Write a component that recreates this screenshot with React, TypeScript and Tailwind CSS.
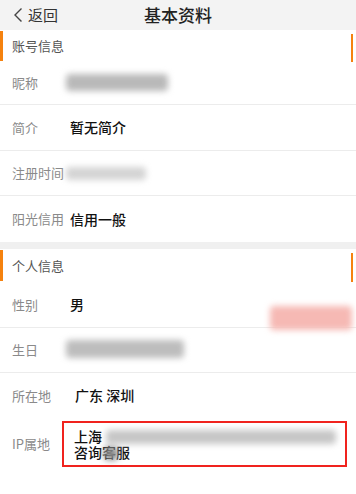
import React from "react";

const Blur = ({ className }: { className: string }) => (
  <div className={`absolute rounded-sm blur-[3px] ${className}`} />
);

const Row = ({
  label,
  h,
  children,
  divider = true,
}: {
  label: string;
  h: string;
  children?: React.ReactNode;
  divider?: boolean;
}) => (
  <div className={`relative flex items-center pl-3 ${h} ${divider ? "border-b border-[#ececec]" : ""}`}>
    <span className="w-[58px] shrink-0 text-[13px] text-[#8a8a8a]">{label}</span>
    <div className="text-[14px] text-[#111]">{children}</div>
  </div>
);

const Section = ({ title, h }: { title: string; h: string }) => (
  <div className={`relative flex items-center bg-white pl-3 ${h}`}>
    <div className="absolute left-0 top-[1px] bottom-[1px] w-[3px] bg-[#f5820f]" />
    <div className="absolute right-[3px] top-[4px] bottom-0 w-[2px] bg-[#f5820f]" />
    <span className="text-[13px] text-[#555]">{title}</span>
  </div>
);

export default function App() {
  return (
    <div
      className="relative h-[494px] w-[356px] overflow-hidden bg-white"
      style={{ fontFamily: '"Noto Sans CJK SC", "Noto Sans", sans-serif' }}
    >
      {/* Header */}
      <div className="relative flex h-[30px] items-center bg-[#f3f3f3]">
        <div className="flex items-center pl-[13px] text-[15px] text-[#333]">
          <svg width="10" height="16" viewBox="0 0 10 16" className="mr-[5px]">
            <path d="M8.5 1.5 L2 8 L8.5 14.5" fill="none" stroke="#444" strokeWidth="1.4" />
          </svg>
          返回
        </div>
        <div className="absolute left-0 right-0 text-center text-[17px] font-medium text-[#222]">基本资料</div>
      </div>

      <Section title="账号信息" h="h-[32px]" />
      <Row label="昵称" h="h-[43px]">
        <Blur className="left-[66px] top-[12px] h-[17px] w-[102px] bg-[#b9b9b9]" />
      </Row>
      <Row label="简介" h="h-[46px]">
        <span className="font-medium">暂无简介</span>
      </Row>
      <Row label="注册时间" h="h-[45px]">
        <Blur className="left-[66px] top-[16px] h-[13px] w-[80px] bg-[#d4d4d4]" />
      </Row>
      <Row label="阳光信用" h="h-[46px]" divider={false}>
        <span className="font-medium">信用一般</span>
      </Row>
      <div className="h-[7px] bg-[#f0f0f0]" />

      <Section title="个人信息" h="h-[33px]" />
      <Row label="性别" h="h-[46px]">
        <span className="font-medium">男</span>
        <Blur className="left-[270px] top-[24px] h-[24px] w-[82px] bg-[#f6b9b4]" />
      </Row>
      <Row label="生日" h="h-[45px]">
        <Blur className="left-[66px] top-[12px] h-[18px] w-[118px] bg-[#bdbdbd]" />
      </Row>
      <Row label="所在地" h="h-[45px]" divider={false}>
        <span className="ml-[5px] font-medium">广东 深圳</span>
      </Row>
      <div className="flex h-[52px] items-center pl-3">
        <span className="w-[50px] shrink-0 text-[13px] text-[#8a8a8a]">IP属地</span>
        <div className="relative flex h-[46px] w-[285px] flex-col justify-center border-[2px] border-[#f0231e] pl-[10px] text-[14px] font-medium leading-[16px] text-[#111]">
          <span className="block">上海</span>
          <span className="block">咨询客服</span>
          <Blur className="left-[42px] top-[7px] h-[14px] w-[230px] bg-[#c6c6c6]" />
          <Blur className="left-[40px] top-[24px] h-[13px] w-[14px] bg-[#8a8a8a]" />
        </div>
      </div>
    </div>
  );
}
